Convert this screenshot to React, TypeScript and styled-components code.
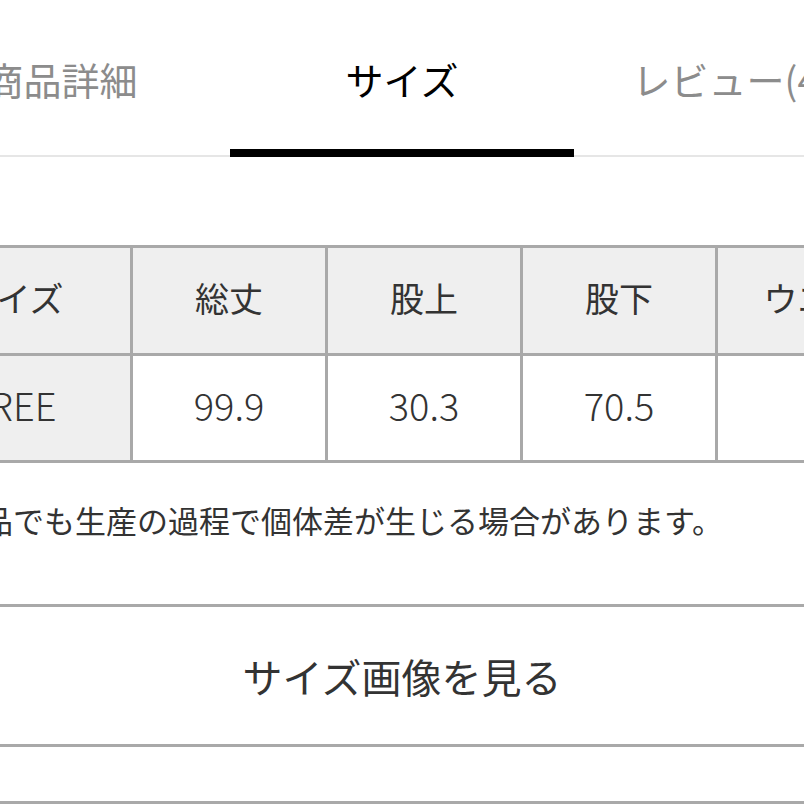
import styled, { createGlobalStyle } from 'styled-components';

const GlobalStyle = createGlobalStyle`
     html, body {
          margin: 0;
          padding: 0;
          background: #fff;
     }

     body {
          font-family: 'Noto Sans CJK JP', 'Noto Sans', sans-serif;
          color: #333;
     }
`;

const Viewport = styled.div`
     width: 804px;
     height: 804px;
     overflow: hidden;
`;

// the screenshot is a crop of a wider page, so the page sits a bit to the left
const Page = styled.div`
     width: 1018px;
     margin-left: -107px;
`;

const TabRow = styled.nav`
     display: flex;
     border-bottom: 2px solid #e6e6e6;
`;

const Tab = styled.button<{ $active?: boolean; $width: number }>`
     width: ${(p) => p.$width}px;
     height: 157px;
     margin-bottom: -2px;
     padding: 8px 0 0;
     display: flex;
     align-items: center;
     justify-content: center;
     background: none;
     border: none;
     border-bottom: 8px solid ${(p) => (p.$active ? '#000' : 'transparent')};
     font-family: inherit;
     font-size: 38px;
     font-weight: 400;
     color: ${(p) => (p.$active ? '#000' : '#8c8c8c')};
     white-space: nowrap;
     cursor: pointer;
`;

const SizeTable = styled.table`
     margin-top: 88px;
     width: 1052px;
     table-layout: fixed;
     border-collapse: collapse;

     th,
     td {
          border: 3px solid #a9a9a9;
          padding: 0;
          text-align: center;
          color: #333;
          font-weight: 400;
          white-space: nowrap;
     }

     th {
          height: 99px;
          padding-bottom: 6px;
          font-size: 34px;
          background: #efefef;
     }

     td {
          height: 96px;
          padding-bottom: 8px;
          font-size: 38px;
          font-weight: 300;
          background: #fff;
     }

     td.label {
          background: #efefef;
     }
`;

const Note = styled.p`
     margin: 34px 0 0;
     text-indent: -4px;
     font-size: 31px;
     line-height: 45px;
     color: #333;
     white-space: nowrap;
`;

const ImageButton = styled.button`
     margin-top: 62px;
     width: 100%;
     height: 143px;
     padding: 0;
     display: flex;
     align-items: center;
     justify-content: center;
     background: #fff;
     border: none;
     border-top: 3px solid #a9a9a9;
     border-bottom: 3px solid #a9a9a9;
     font-family: inherit;
     font-size: 40px;
     color: #333;
     cursor: pointer;
`;

const Divider = styled.div`
     margin-top: 54px;
     height: 3px;
     background: #a9a9a9;
`;

const columns = ['サイズ', '総丈', '股上', '股下', 'ウエスト'];
const rows = [{ size: 'FREE', values: ['99.9', '30.3', '70.5', ''] }];

const App = () => {
     return (
          <>
               <GlobalStyle />
               <Viewport>
                    <Page>
                         <TabRow>
                              <Tab $width={337}>商品詳細</Tab>
                              <Tab $width={344} $active>
                                   サイズ
                              </Tab>
                              <Tab $width={337}>レビュー(45)</Tab>
                         </TabRow>

                         <SizeTable>
                              <colgroup>
                                   <col style={{ width: 237 }} />
                                   <col style={{ width: 195 }} />
                                   <col style={{ width: 195 }} />
                                   <col style={{ width: 195 }} />
                                   <col style={{ width: 230 }} />
                              </colgroup>
                              <thead>
                                   <tr>
                                        {columns.map((c) => (
                                             <th key={c}>{c}</th>
                                        ))}
                                   </tr>
                              </thead>
                              <tbody>
                                   {rows.map((r) => (
                                        <tr key={r.size}>
                                             <td className='label'>{r.size}</td>
                                             {r.values.map((v, i) => (
                                                  <td key={i}>{v}</td>
                                             ))}
                                        </tr>
                                   ))}
                              </tbody>
                         </SizeTable>

                         <Note>
                              同じ商品でも生産の過程で個体差が生じる場合があります。
                         </Note>

                         <ImageButton>サイズ画像を見る</ImageButton>
                         <Divider />
                    </Page>
               </Viewport>
          </>
     );
};

export default App;
